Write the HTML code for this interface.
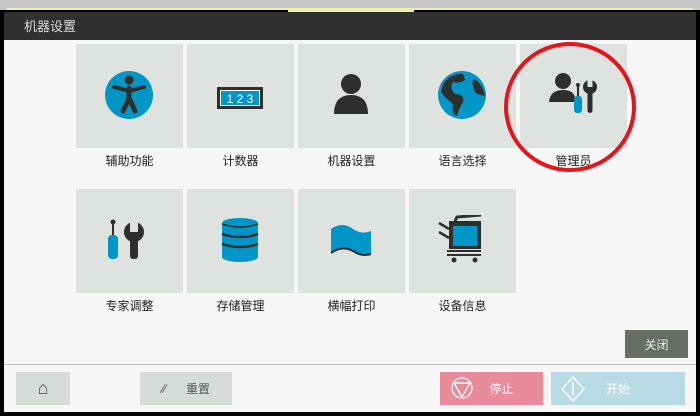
<!DOCTYPE html>
<html><head><meta charset="utf-8"><style>
*{margin:0;padding:0;box-sizing:border-box}
body{width:700px;height:416px;overflow:hidden;background:#000;font-family:"Liberation Sans","Noto Sans CJK SC",sans-serif;position:relative}
.top{position:absolute;left:0;top:0;width:700px;height:10px;background:#c8c8c8}
.yl{position:absolute;left:7px;top:8px;width:686px;height:2px;background:#f4efa8}
.tab{position:absolute;left:288px;top:8px;width:126px;height:5px;background:#f4efa8}
.hdr{position:absolute;left:4px;top:12px;width:692px;height:28px;background:#303030;color:#ddd;font-size:13px;padding:4px 0 0 20px}
.main{position:absolute;left:4px;top:40px;width:692px;height:372px;background:#f7f7f7}
.tile{position:absolute;width:107px;height:104px;background:#dfe3e0}
.lbl{position:absolute;width:107px;text-align:center;font-size:12px;color:#222}
.tile svg{position:absolute;left:28px;top:26px}
.btn{position:absolute;height:33px;font-size:12px;display:flex;align-items:center;justify-content:center}
</style></head><body>
<div class="top"></div><div class="yl"></div><div class="tab"></div>
<div class="hdr">机器设置</div>
<div class="main">
<div class="tile" style="left:72px;top:4px"><svg width="50" height="50" viewBox="0 0 50 50"><circle cx="25" cy="25" r="24" fill="#0096c8"/><circle cx="25" cy="10" r="4.5" fill="#2d2f2d"/><path d="M10 17 L25 21 L40 17" stroke="#2d2f2d" stroke-width="4" fill="none" stroke-linecap="round"/><path d="M25 18 L25 29 M25 28 L19 41 M25 28 L31 41" stroke="#2d2f2d" stroke-width="5" fill="none" stroke-linecap="round"/></svg></div>
<div class="tile" style="left:183px;top:4px"><svg width="50" height="50" viewBox="0 0 50 50"><rect x="2" y="17" width="46" height="22" fill="#2d2f2d"/><rect x="5" y="20" width="40" height="16" fill="#fff"/><rect x="6" y="21" width="38" height="14" fill="#0096c8"/><text x="25" y="33" fill="#fff" font-size="12" text-anchor="middle" font-family="Liberation Sans">1 2 3</text></svg></div>
<div class="tile" style="left:294px;top:4px"><svg width="50" height="50" viewBox="0 0 50 50"><circle cx="25" cy="14" r="10" fill="#2d2f2d"/><path d="M8 44 Q8 25 25 25 Q42 25 42 44 Z" fill="#2d2f2d"/></svg></div>
<div class="tile" style="left:405px;top:4px"><svg width="50" height="50" viewBox="0 0 50 50"><circle cx="25" cy="25" r="24" fill="#0096c8"/><path d="M6 14 Q14 3 26 4 L28 10 Q22 14 16 12 Q12 18 18 24 Q28 24 26 32 Q22 38 20 46 Q14 44 16 34 Q8 28 4 22 Z" fill="#2d2f2d"/><path d="M36 8 Q46 14 48 26 L40 24 Q34 18 36 8Z" fill="#2d2f2d"/></svg></div>
<div class="tile" style="left:516px;top:4px"><svg width="50" height="50" viewBox="0 0 50 50"><circle cx="15" cy="11" r="8" fill="#2d2f2d"/><path d="M1 32 Q2 20 15 20 Q26 20 27 28 L27 32Z" fill="#2d2f2d"/><rect x="29" y="15" width="2" height="12" fill="#2d2f2d"/><circle cx="30" cy="15" r="2" fill="#2d2f2d"/><rect x="26" y="26" width="8" height="17" rx="3" fill="#0096c8"/><circle cx="42" cy="17" r="7" fill="#2d2f2d"/><rect x="39.5" y="8" width="5" height="9" fill="#dfe3e0"/><rect x="39.5" y="20" width="5" height="23" rx="2.5" fill="#2d2f2d"/></svg></div>
<div class="lbl" style="left:72px;top:112px">辅助功能</div>
<div class="lbl" style="left:183px;top:112px">计数器</div>
<div class="lbl" style="left:294px;top:112px">机器设置</div>
<div class="lbl" style="left:405px;top:112px">语言选择</div>
<div class="lbl" style="left:516px;top:112px">管理员</div>
<div class="tile" style="left:72px;top:149px"><svg width="50" height="50" viewBox="0 0 50 50"><rect x="8" y="6" width="2" height="16" fill="#2d2f2d"/><circle cx="9" cy="7" r="2.5" fill="#2d2f2d"/><rect x="4" y="20" width="10" height="24" rx="4" fill="#0096c8"/><circle cx="30" cy="17" r="10" fill="#2d2f2d"/><rect x="26" y="4" width="8" height="13" fill="#dfe3e0"/><rect x="26" y="22" width="8" height="22" rx="3" fill="#2d2f2d"/></svg></div>
<div class="tile" style="left:183px;top:149px"><svg width="50" height="50" viewBox="0 0 50 50"><ellipse cx="25" cy="8" rx="18" ry="5" fill="#0096c8"/><rect x="7" y="8" width="36" height="34" fill="#0096c8"/><ellipse cx="25" cy="42" rx="18" ry="5" fill="#0096c8"/><path d="M7 19 Q25 25 43 19 M7 29 Q25 35 43 29" stroke="#2d2f2d" stroke-width="2.5" fill="none"/><path d="M7 9 Q25 15 43 9" stroke="#2d2f2d" stroke-width="1.5" fill="none"/></svg></div>
<div class="tile" style="left:294px;top:149px"><svg width="50" height="50" viewBox="0 0 50 50"><path d="M5 14 Q16 6 27 14 Q36 20 45 16 L45 39 Q36 42 27 36 Q16 30 5 38 Z" fill="#0096c8"/><path d="M5 38 Q16 30 27 36 Q36 42 45 39" stroke="#2d2f2d" stroke-width="2" fill="none"/></svg></div>
<div class="tile" style="left:405px;top:149px"><svg width="50" height="50" viewBox="0 0 50 50"><path d="M2 8 L12 14 M2 17 L12 23" stroke="#2d2f2d" stroke-width="2.5"/><rect x="12" y="6" width="32" height="28" fill="#2d2f2d"/><rect x="16" y="11" width="24" height="20" fill="#0096c8"/><path d="M18 6 L20 2 L44 0" stroke="#2d2f2d" stroke-width="3" fill="none"/><rect x="10" y="35" width="34" height="2" fill="#2d2f2d"/><rect x="10" y="39" width="34" height="2" fill="#2d2f2d"/><circle cx="17" cy="45" r="2.5" fill="#2d2f2d"/><circle cx="38" cy="45" r="2.5" fill="#2d2f2d"/></svg></div>
<div class="lbl" style="left:72px;top:257px">专家调整</div>
<div class="lbl" style="left:183px;top:257px">存储管理</div>
<div class="lbl" style="left:294px;top:257px">横幅打印</div>
<div class="lbl" style="left:405px;top:257px">设备信息</div>
<div class="btn" style="left:621px;top:290px;width:63px;height:28px;background:#686d68;color:#eee">关闭</div>
<div style="position:absolute;left:0;top:324px;width:692px;height:1px;background:#bbb"></div>
<div class="btn" style="left:12px;top:332px;width:54px;background:#d7dcd9;color:#444;font-size:18px">⌂</div>
<div class="btn" style="left:136px;top:332px;width:92px;background:#d7dcd9;color:#555">⁄⁄&nbsp;&nbsp;&nbsp;&nbsp;&nbsp;&nbsp;重置</div>
<div class="btn" style="left:436px;top:332px;width:103px;background:#e98b9b;color:#fff"><svg width="22" height="22" viewBox="0 0 22 22" style="position:absolute;left:11px;top:5px"><circle cx="11" cy="11" r="10" stroke="#fff" stroke-width="1.3" fill="none"/><path d="M3 6 L19 6 L11 20Z" stroke="#fff" stroke-width="1.3" fill="none"/></svg><span style="margin-left:20px">停止</span></div>
<div class="btn" style="left:547px;top:332px;width:134px;background:#b9dce4;color:#fff"><svg width="24" height="26" viewBox="0 0 24 26" style="position:absolute;left:10px;top:4px"><path d="M12 1 L23 13 L12 25 L1 13Z" stroke="#fff" stroke-width="1.3" fill="none"/><path d="M12 6 L12 20" stroke="#fff" stroke-width="1.3"/></svg>开始</div>
</div>
<svg width="700" height="416" style="position:absolute;left:0;top:0"><ellipse cx="570" cy="107" rx="64" ry="63" stroke="#e8141a" stroke-width="4" fill="none"/></svg>
</body></html>
